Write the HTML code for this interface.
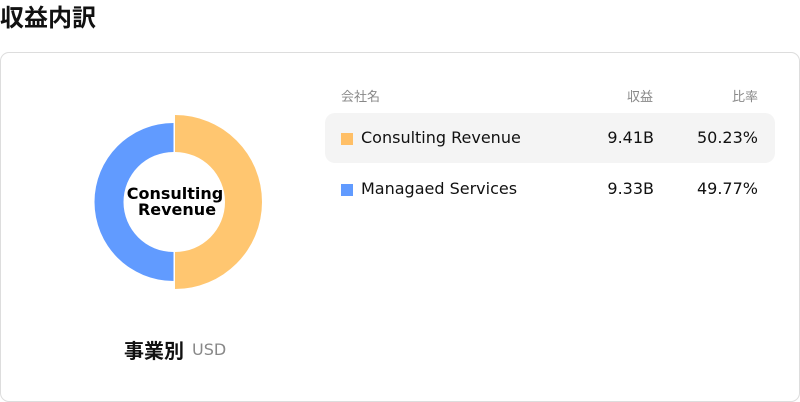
<!DOCTYPE html>
<html><head><meta charset="utf-8"><style>
body{margin:0;width:800px;height:402px;background:#fff;font-family:"DejaVu Sans","Noto Sans CJK JP",sans-serif;position:relative;overflow:hidden;color:#111}
.t{position:absolute;left:0;top:0px;font-size:24px;line-height:32px;font-weight:bold;font-family:"Noto Sans CJK JP",sans-serif}
.card{position:absolute;left:0;top:52px;width:798px;height:348px;border:1px solid #ddd;border-radius:9px}
.a{position:absolute;white-space:nowrap}
.h{font-size:13px;color:#888;top:86px;font-family:"Noto Sans CJK JP",sans-serif}
.r{font-size:16px;color:#111}
.sq{position:absolute;width:12px;height:12px}
</style></head><body>
<div class="t">収益内訳</div>
<div class="card"></div>
<svg class="a" style="left:0;top:0" width="300" height="320">
<path d="M175,115 A87,87 0 0 1 175,289 L175,252 A50,50 0 0 0 175,152 Z" fill="#ffc670"/>
<path d="M173.5,123 A79,79 0 0 0 173.5,281 L173.5,252 A50,50 0 0 1 173.5,152 Z" fill="#619bff"/>
<text x="175" y="199" text-anchor="middle" font-size="16" font-weight="bold" font-family="DejaVu Sans">Consulting</text>
<text x="177" y="215" text-anchor="middle" font-size="16" font-weight="bold" font-family="DejaVu Sans">Revenue</text>
</svg>
<div class="a" style="left:124px;top:335px;font-size:20px;font-weight:bold;font-family:'Noto Sans CJK JP',sans-serif">事業別</div>
<div class="a" style="left:192px;top:340px;font-size:16px;color:#888">USD</div>
<div class="a h" style="left:341px">会社名</div>
<div class="a h" style="left:627px">収益</div>
<div class="a h" style="left:732px">比率</div>
<div class="a" style="left:325px;top:113px;width:450px;height:50px;background:#f4f4f4;border-radius:10px"></div>
<div class="sq" style="left:341px;top:133px;background:#ffbf66"></div>
<div class="a r" style="left:361px;top:128px">Consulting Revenue</div>
<div class="a r" style="right:146px;top:128px">9.41B</div>
<div class="a r" style="right:42px;top:128px">50.23%</div>
<div class="sq" style="left:341px;top:184px;background:#619bff"></div>
<div class="a r" style="left:361px;top:179px">Managaed Services</div>
<div class="a r" style="right:146px;top:179px">9.33B</div>
<div class="a r" style="right:42px;top:179px">49.77%</div>
</body></html>
